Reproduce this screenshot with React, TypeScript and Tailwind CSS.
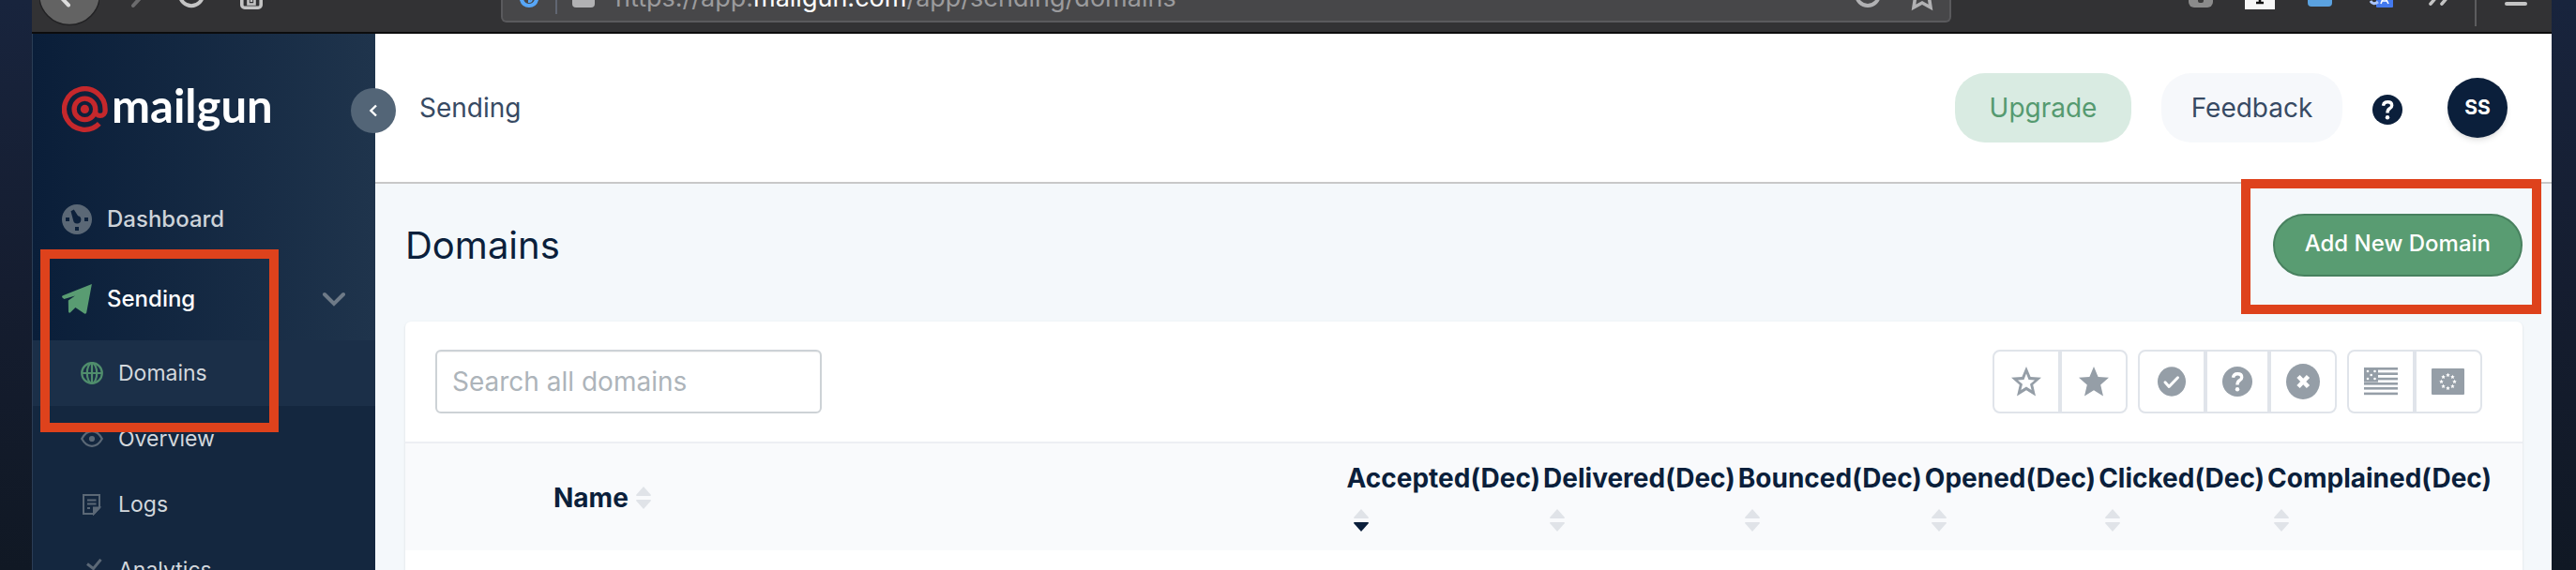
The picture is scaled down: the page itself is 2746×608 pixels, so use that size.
import React from 'react';
import clsx from 'clsx';

type IconProps = { className?: string };

const SpiralMark = () => (
  <svg width="49" height="49" viewBox="0 0 49 49" fill="none" stroke="#c5282c" strokeWidth="5.3">
    <path d="M39.8 39.8 A21.8 21.8 0 1 1 46.1 24.4 V26.2 a5.25 5.25 0 0 1 -10.5 0 V24.4" />
    <circle cx="24.4" cy="24.4" r="11.3" />
    <circle cx="24.4" cy="24.4" r="4.6" fill="#c5282c" stroke="none" />
  </svg>
);

const GaugeIcon = () => (
  <svg width="32" height="32" viewBox="0 0 32 32" className="text-[#5b6876]">
    <mask id="gauge">
      <rect width="32" height="32" fill="#fff" />
      <rect x="4" y="14" width="4" height="4" fill="#000" />
      <rect x="24" y="14" width="4" height="4" fill="#000" />
      <rect x="14" y="24" width="4" height="4" fill="#000" />
      <path d="M9.5 7.3 l3.3 -1.8 l4.3 6.7 a4.2 4.2 0 1 1 -5.1 4.6 z" fill="#000" />
    </mask>
    <circle cx="16" cy="16" r="16" fill="currentColor" mask="url(#gauge)" />
  </svg>
);

const PlaneIcon = () => (
  <svg width="32" height="32" viewBox="0 0 32 32" fill="#599c72">
    <path d="M31.9 0 L1 12.2 Q-.4 13 .3 14.2 L2.3 16 L14 12.4 L6.8 17.6 L7 29.6 Q7.2 31.2 8.8 30.6 L14.4 25 L24 31.4 Q25.6 32.4 26.2 30.6 Z" />
  </svg>
);

const GlobeIcon = () => (
  <svg width="24" height="24" viewBox="0 0 24 24" fill="none" stroke="#4f8d6c" strokeWidth="2.2">
    <circle cx="12" cy="12" r="10.8" />
    <ellipse cx="12" cy="12" rx="5.2" ry="10.8" />
    <path d="M12 1 V23 M1 12 H23" />
  </svg>
);

const EyeIcon = () => (
  <svg width="24" height="24" viewBox="0 0 24 24" fill="none" stroke="#5b6876" strokeWidth="2.2">
    <path d="M1.2 12 Q5.5 4.2 12 4.2 T22.8 12 Q18.5 19.8 12 19.8 T1.2 12 Z" />
    <circle cx="12" cy="12" r="3.1" fill="#5b6876" stroke="none" />
  </svg>
);

const NoteIcon = () => (
  <svg width="24" height="24" viewBox="0 0 24 24" fill="none" stroke="#5b6876" strokeWidth="2">
    <path d="M3 2 H20 V15.5 L14 22 H3 Z" />
    <path d="M14 22 V15.5 H20 Z" fill="#5b6876" />
    <path d="M7 7.5 H16.5 M7 11.5 H16.5 M7 16 H10" />
  </svg>
);

const ChartIcon = () => (
  <svg width="24" height="24" viewBox="0 0 24 24" fill="none" stroke="#5b6876" strokeWidth="3">
    <path d="M7 5.5 L13.5 10.5 L21.5 0.8" />
    <path d="M2 14 V23 H22" />
  </svg>
);

const QuestionIcon = ({ className }: IconProps) => (
  <svg viewBox="0 0 32 32" className={className}>
    <circle cx="16" cy="16" r="16" fill="currentColor" />
    <path d="M11.5 11.8 Q12 7.7 16.2 7.7 Q20.7 7.7 20.7 11.4 Q20.7 13.4 18.4 14.8 Q16 16.2 16 19.6" fill="none" stroke="#fff" strokeWidth="3.4" />
    <circle cx="16" cy="24.2" r="2.2" fill="#fff" />
  </svg>
);

const starPath = 'M16 0 L20.6 11 L32 11.8 L23.2 19.6 L26 31.4 L16 25.2 L6 31.4 L8.8 19.6 L0 11.8 L11.4 11 Z';

const StarOutline = () => (
  <svg width="32" height="32" viewBox="0 0 32 32" fill="#959ea7" fillRule="evenodd">
    <path d={`${starPath} M16 7.6 L18.5 13.9 L25 14.4 L20 18.7 L21.6 25 L16 21.6 L10.4 25 L12 18.7 L7 14.4 L13.5 13.9 Z`} />
  </svg>
);

const StarSolid = () => (
  <svg width="32" height="32" viewBox="0 0 32 32" fill="#959ea7">
    <path d={starPath} />
  </svg>
);

const CheckCircle = () => (
  <svg width="30" height="32" viewBox="0 0 30 32">
    <ellipse cx="15" cy="16" rx="15" ry="15.7" fill="#959ea7" />
    <path d="M8 16.8 L12.2 21.4 L21.5 11.8" fill="none" stroke="#fff" strokeWidth="3" strokeLinecap="round" strokeLinejoin="round" />
  </svg>
);

const CrossCircle = () => (
  <svg width="36" height="38" viewBox="0 0 36 38">
    <ellipse cx="18" cy="19" rx="18" ry="19" fill="#959ea7" />
    <path d="M13 13.5 L23.5 24.5 M23.5 13.5 L13 24.5" stroke="#fff" strokeWidth="4.6" />
  </svg>
);

const UsFlag = () => (
  <svg width="36" height="30" viewBox="0 0 36 30" fill="#959ea7">
    {[0, 5.4, 10.8, 16, 21, 26.6].map((y) => (
      <rect key={y} x="0" y={y} width="36" height="2.6" />
    ))}
    <rect width="15" height="15.6" />
    {[[4, 4], [11.5, 4], [7.7, 8], [4, 12], [11.5, 12]].map(([x, y]) => (
      <circle key={`${x}-${y}`} cx={x} cy={y} r="1.3" fill="#fff" />
    ))}
  </svg>
);

const EuFlag = () => (
  <svg width="36" height="28" viewBox="0 0 36 28">
    <rect width="35" height="28" rx="1" fill="#959ea7" />
    {[0, 45, 90, 135, 180, 225, 270, 315].map((deg) => (
      <path
        key={deg}
        transform={`translate(${17.5 + 7 * Math.sin((deg * Math.PI) / 180)} ${14 - 7 * Math.cos((deg * Math.PI) / 180)})`}
        d="M0 -2.3 L.7 -.8 L2.2 -.7 L1.1 .4 L1.4 2 L0 1.2 L-1.4 2 L-1.1 .4 L-2.2 -.7 L-.7 -.8 Z"
        fill="#fff"
      />
    ))}
  </svg>
);

const SortArrows: React.FC<{ active?: boolean }> = ({ active }) => (
  <svg width="16" height="24" viewBox="0 0 16 24">
    <path d="M8 0 L16 9 Q16 10 15 10 H1 Q0 10 0 9 Z" fill="#e0e3e8" />
    <path d="M8 24 L16 15 Q16 14 15 14 H1 Q0 14 0 15 Z" fill={active ? '#0b1f3b' : '#e0e3e8'} />
  </svg>
);

const BrowserBar = () => (
  <div className="flex h-[36px] shrink-0 items-start overflow-hidden border-b-2 border-[#0c0c0d] bg-[#323234]">
    <button aria-label="Back" className="ml-2">
      <svg width="64" height="28" viewBox="0 0 64 28">
        <circle cx="32" cy="-6" r="32.5" fill="#636363" stroke="#222224" strokeWidth="1.5" />
        <path d="M20 -6 L31 5.5" stroke="#dcdcdc" strokeWidth="4" strokeLinecap="round" />
      </svg>
    </button>
    <button aria-label="Forward" className="ml-[34px]">
      <svg width="16" height="10" viewBox="0 0 16 10">
        <path d="M2 6 L12 -5" stroke="#6b6b6d" strokeWidth="4" strokeLinecap="round" />
      </svg>
    </button>
    <button aria-label="Reload" className="ml-[34px]">
      <svg width="28" height="10" viewBox="0 0 28 10">
        <circle cx="14" cy="-6" r="12.2" fill="none" stroke="#c4c4c4" strokeWidth="4" />
      </svg>
    </button>
    <button aria-label="Home" className="ml-[38px]">
      <svg width="24" height="10" viewBox="0 0 24 10" fill="none" stroke="#c4c4c4">
        <rect x="1.8" y="-14" width="20.4" height="22.2" rx="3" strokeWidth="3.6" />
        <path d="M8.5 -6 V4.5 H15.5 V-6 M12 -6 V2" strokeWidth="2.6" />
      </svg>
    </button>
    <div className="ml-[254px] flex h-[24px] min-w-0 flex-1 items-start overflow-hidden rounded-b-md border-2 border-t-0 border-[#5a5a5d] bg-[#474749]">
      <svg width="24" height="10" viewBox="0 0 24 10" className="ml-4 shrink-0">
        <path d="M3 -8 Q3 6 12 6 T21 -8" fill="none" stroke="#57a6f7" strokeWidth="4" />
        <path d="M12 -4 V2 Q15 2 15 -2" fill="none" stroke="#57a6f7" strokeWidth="2" />
      </svg>
      <span className="ml-4 h-[15px] w-[2px] shrink-0 bg-[#606672]" />
      <span className="ml-4 h-[8px] w-6 shrink-0 rounded-b-sm bg-[#b1b1b3]" />
      <span className="-mt-[14px] ml-[22px] flex-1 whitespace-nowrap text-[27px] leading-[24px] text-[#9b9b9d]">
        https://app.<span className="text-white">mailgun.com</span>/app/sending/domains
      </span>
      <svg width="28" height="10" viewBox="0 0 28 10" className="mr-[31px] shrink-0">
        <circle cx="14" cy="-6" r="12" fill="none" stroke="#b1b1b3" strokeWidth="4" />
      </svg>
      <svg width="26" height="12" viewBox="0 0 26 12" className="mr-4 shrink-0">
        <path d="M5.5 -2 L4 8 L13 3 L22 8 L20.5 -2" fill="none" stroke="#b1b1b3" strokeWidth="3.6" />
      </svg>
    </div>
    <div className="ml-[252px] flex items-start">
      <svg width="28" height="10" viewBox="0 0 28 10">
        <rect x="1" y="-20" width="26" height="28" rx="6" fill="#8b8b8b" />
        <rect x="11" y="-6" width="6" height="9" rx="2" fill="#3a3a3a" />
      </svg>
      <span className="ml-[33px] flex h-[10px] w-8 items-start justify-center overflow-hidden bg-[#f7f7f7]">
        <svg width="10" height="5" viewBox="0 0 10 5">
          <path d="M5 0 V3 M1 3 H9" stroke="#111" strokeWidth="2.6" />
        </svg>
      </span>
      <span className="ml-[35px] h-[7px] w-[26px] rounded-b-sm bg-[#5ba2e0]" />
      <svg width="26" height="8" viewBox="0 0 26 8" className="ml-[40px]">
        <rect x="7" y="-14" width="18" height="22" rx="1" fill="#4379ee" />
        <path d="M1 1 Q4 6 9 2" stroke="#a9c4fa" strokeWidth="3" fill="none" />
        <path d="M12 4 L15.5 -5 L20 4 M13 1 H18.5" stroke="#fff" strokeWidth="1.6" fill="none" />
      </svg>
      <svg width="26" height="8" viewBox="0 0 26 8" className="ml-[35px]" stroke="#c4c4c4" strokeWidth="3.6" strokeLinecap="round">
        <path d="M4 4.2 L10 -3 M16 4.2 L22 -3" />
      </svg>
      <span className="ml-[25px] h-[28px] w-[2px] bg-[#5c5c5e]" />
      <button aria-label="Menu" className="mr-[26px] ml-[30px] flex h-[6px] w-6 items-end">
        <span className="h-[4px] w-6 rounded-full bg-[#c4c4c4]" />
      </button>
    </div>
  </div>
);

const subItems = [
  { label: 'Domains', icon: <GlobeIcon />, active: true },
  { label: 'Overview', icon: <EyeIcon /> },
  { label: 'Logs', icon: <NoteIcon /> },
  { label: 'Analytics', icon: <ChartIcon /> },
];

const Sidebar = () => (
  <aside className="relative z-10 w-[366px] shrink-0 border-l border-[#2b3d55] bg-linear-to-r from-[#0a1e39] to-[#1f344c]">
    <a href="#" aria-label="mailgun" className="flex h-[156px] items-center pt-1 pl-[31px]">
      <SpiralMark />
      <span className="-mt-2 ml-1 font-[Lato] text-[49px] leading-[60px] font-bold text-white">mailgun</span>
    </a>
    <button
      aria-label="Collapse menu"
      className="absolute top-[58px] -right-[22px] flex size-12 items-center justify-center rounded-full bg-[#536577]"
    >
      <svg width="10" height="14" viewBox="0 0 10 14" fill="none" stroke="#fff" strokeWidth="2.4">
        <path d="M8 1.5 L2.4 7 L8 12.5" />
      </svg>
    </button>
    <nav>
      <a href="#" className="flex h-[84px] items-center gap-4 pl-[31px] text-2xl font-medium text-[#cdd3d9]">
        <GaugeIcon />
        Dashboard
      </a>
      <a href="#" className="flex h-[87px] items-center gap-4 pr-8 pb-0.5 pl-[31px] text-2xl font-medium text-white">
        <PlaneIcon />
        <span className="flex-1">Sending</span>
        <svg width="24" height="16" viewBox="0 0 24 16" fill="none" stroke="#6e7a87" strokeWidth="4" strokeLinecap="round">
          <path d="M2 3 L12 13 L22 3" />
        </svg>
      </a>
      <ul className="bg-[#14273f]">
        {subItems.map(({ label, icon, active }) => (
          <li key={label}>
            <a
              href="#"
              className={clsx('flex h-[70px] items-center gap-4 pl-[51px] text-[23px] text-[#d3d8dd]', active && 'bg-[#1b2f48]')}
            >
              {icon}
              {label}
            </a>
          </li>
        ))}
      </ul>
    </nav>
  </aside>
);

const TopBar = () => (
  <header className="flex h-[160px] items-center border-b-2 border-[#c8c8c8] bg-white pr-[47px] pl-[47px]">
    <span className="flex-1 text-[28px] text-[#374a63]">Sending</span>
    <button className="h-[74px] w-[188px] rounded-[32px] bg-[#d9ebe2] text-[28px] text-[#559a70]">Upgrade</button>
    <button className="ml-8 h-[74px] w-[193px] rounded-[32px] bg-[#f6f8fb] text-[28px] text-[#374a63]">Feedback</button>
    <button aria-label="Help" className="mt-1 ml-8 text-[#0b1f3b]">
      <QuestionIcon className="size-8" />
    </button>
    <button className="ml-12 size-16 rounded-full bg-[#0b1f3b] text-[21px] font-bold text-white shadow-md">SS</button>
  </header>
);

const filterGroups = [
  [
    { label: 'Not starred', icon: <StarOutline /> },
    { label: 'Starred', icon: <StarSolid /> },
  ],
  [
    { label: 'Verified', icon: <CheckCircle /> },
    { label: 'Unverified', icon: <QuestionIcon className="size-8 text-[#959ea7]" /> },
    { label: 'Disabled', icon: <CrossCircle /> },
  ],
  [
    { label: 'US region', icon: <UsFlag /> },
    { label: 'EU region', icon: <EuFlag /> },
  ],
];

const statColumns = ['Accepted', 'Delivered', 'Bounced', 'Opened', 'Clicked', 'Complained'];

const DomainsCard = () => (
  <section className="min-h-0 flex-1 rounded-t-md bg-white shadow-sm">
    <div className="flex items-center justify-between py-[30px] pr-[43px] pl-8">
      <input
        type="search"
        aria-label="Search all domains"
        placeholder="Search all domains"
        className="h-[68px] w-[412px] rounded-md border-2 border-[#cdd2d6] px-4 text-[28px] inset-shadow-xs placeholder:text-[#adb4ba]"
      />
      <div className="flex gap-[11px]">
        {filterGroups.map((group, g) => (
          <div key={g} className="flex h-[68px] divide-x-4 divide-[#e0e4ea] rounded-lg border-2 border-[#e0e4ea]">
            {group.map(({ label, icon }) => (
              <button
                key={label}
                aria-label={label}
                className="flex w-[68px] items-center justify-center first:w-[72px]"
              >
                {icon}
              </button>
            ))}
          </div>
        ))}
      </div>
    </div>
    <table className="w-full border-t-2 border-[#edeff3] bg-[#f9fafc] text-left text-[28px] text-[#0b1f3b]">
      <thead>
        <tr className="h-[115px]">
          <th className="w-[158px] p-0" />
          <th className="p-0 pt-0.5 font-bold">
            <span className="flex items-center gap-2">
              Name <SortArrows />
            </span>
          </th>
          {statColumns.map((name) => (
            <th key={name} className="w-px p-0 pr-[3px] pb-1 font-bold last:pr-[33px]">
              <span className="flex flex-col gap-3">
                <span className="leading-[42px]">{name}(Dec)</span>
                <span className="pl-[7px]">
                  <SortArrows active={name === 'Accepted'} />
                </span>
              </span>
            </th>
          ))}
        </tr>
      </thead>
    </table>
  </section>
);

export default function App() {
  return (
    <div className="h-screen overflow-hidden bg-linear-to-b from-[#18243d] via-[#151d30] to-[#101824] pr-[26px] pl-[34px] font-[Inter,sans-serif]">
      <div className="relative flex h-full flex-col">
        <BrowserBar />
        <div className="flex min-h-0 flex-1">
          <Sidebar />
          <main className="flex min-w-0 flex-1 flex-col bg-[#f4f8fb]">
            <TopBar />
            <div className="flex flex-1 flex-col pr-[31px] pl-8">
              <div className="flex h-[147px] items-center justify-between pb-4">
                <h1 className="text-[40px] text-[#0b1f3b]">Domains</h1>
                <button className="h-[67px] rounded-full border-2 border-[#48815f] bg-[#599c72] px-8 pb-1 text-2xl font-medium text-white">
                  Add New Domain
                </button>
              </div>
              <DomainsCard />
            </div>
          </main>
        </div>

        {/* highlight frames */}
        <div className="pointer-events-none absolute top-[266px] left-[9px] z-20 h-[195px] w-[254px] border-10 border-[#de421c]" />
        <div className="pointer-events-none absolute top-[191px] right-[11px] z-20 h-[144px] w-[320px] border-10 border-[#de421c]" />
      </div>
    </div>
  );
}
